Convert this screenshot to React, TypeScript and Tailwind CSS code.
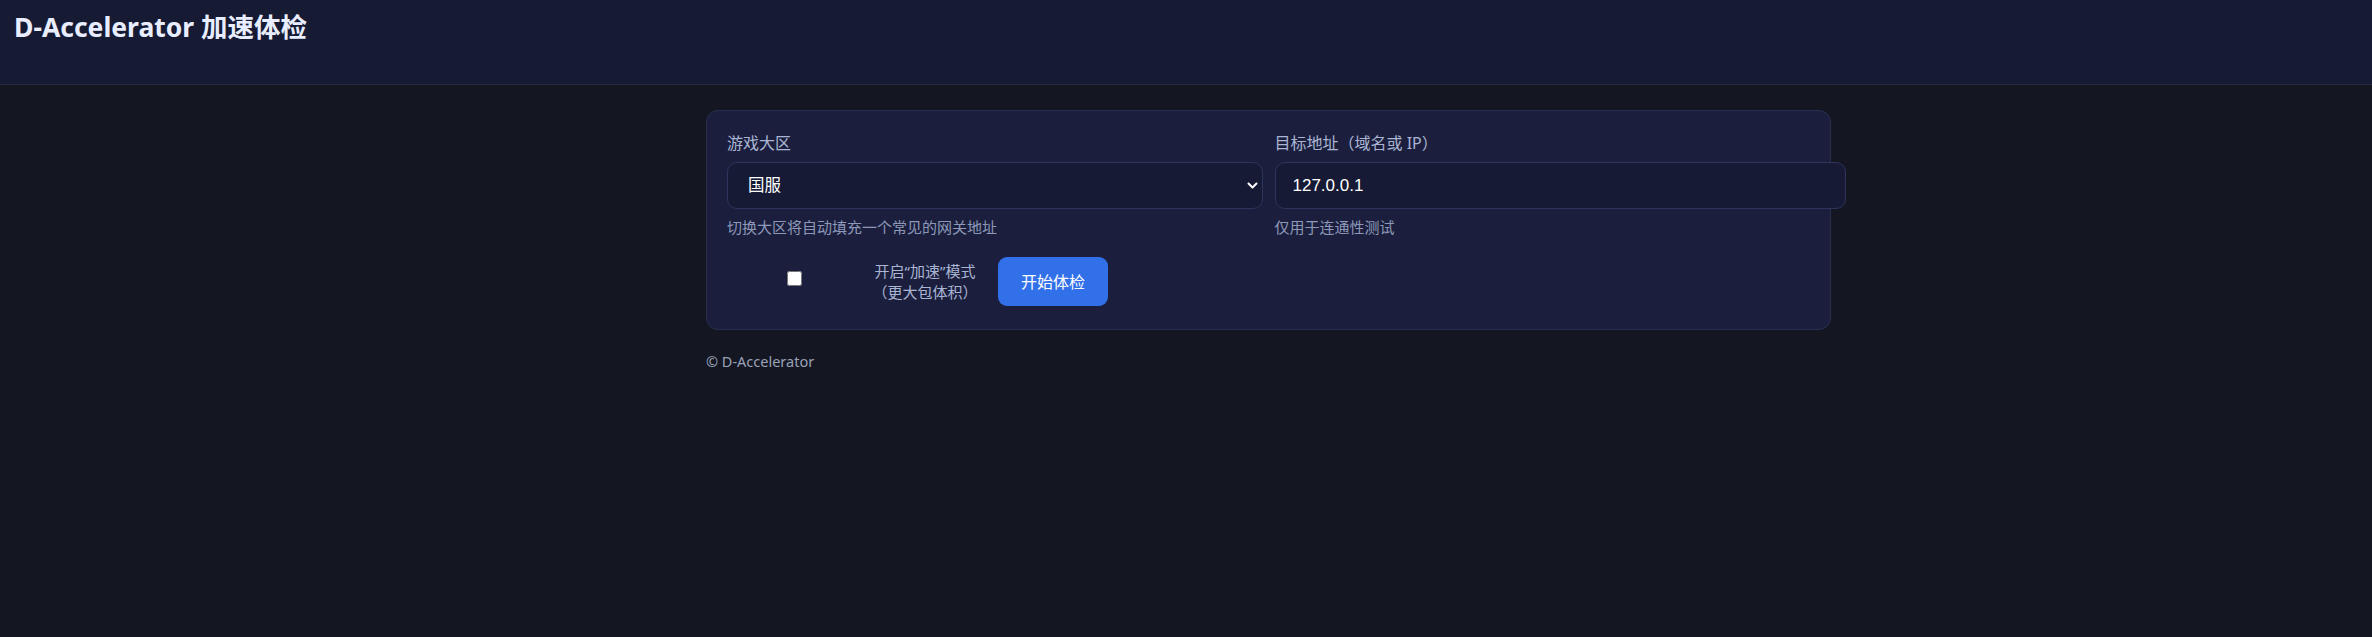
import { useState } from "react"

const regions = [
  { name: "国服", host: "127.0.0.1" },
  { name: "亚服", host: "127.0.0.1" },
  { name: "美服", host: "127.0.0.1" },
  { name: "欧服", host: "127.0.0.1" },
]

export default function App() {
  const [region, setRegion] = useState("国服")
  const [host, setHost] = useState("127.0.0.1")
  const [boost, setBoost] = useState(false)

  return (
    <div className="min-h-[637px] w-full bg-[#141622] font-['Noto_Sans','Noto_Sans_CJK_SC',sans-serif] text-[#dfe6f7]">
      <header className="h-[85px] border-b border-[#262a3f] bg-[#171a33] pl-[14px] pt-[9px]">
        <h1 className="text-[26.5px] font-bold leading-[36px] text-[#e8eeff]">D-Accelerator 加速体检</h1>
      </header>

      <main className="mx-auto w-[960px] pt-[25px]">
        <div className="w-[1125px] rounded-[12px] border border-[#2a2f4e] bg-[#1b1f3d] px-[20px] pt-[20px] pb-[23px]">
          <div className="grid grid-cols-2 gap-x-3">
            <div>
              <label className="mb-[7px] block text-[16px] leading-[24px] text-[#aab5d4]">游戏大区</label>
              <div className="relative">
                <select
                  value={region}
                  onChange={(e) => {
                    setRegion(e.target.value)
                    const r = regions.find((x) => x.name === e.target.value)
                    if (r) setHost(r.host)
                  }}
                  className="h-[47px] w-full appearance-none rounded-[10px] border border-[#2e355c] bg-[#161a35] pl-[20px] text-[16.5px] text-white outline-none"
                >
                  {regions.map((r) => (
                    <option key={r.name} value={r.name}>
                      {r.name}
                    </option>
                  ))}
                </select>
                <svg
                  className="pointer-events-none absolute right-[5px] top-[20px]"
                  width="11"
                  height="8"
                  viewBox="0 0 11 8"
                  fill="none"
                >
                  <path d="M1.5 1.5 5.5 5.5 9.5 1.5" stroke="#ffffff" strokeWidth="2" strokeLinecap="round" strokeLinejoin="round" />
                </svg>
              </div>
              <p className="mt-[8px] text-[15px] leading-[20px] text-[#8d98b9]">切换大区将自动填充一个常见的网关地址</p>
            </div>

            <div>
              <label className="mb-[7px] block text-[16px] leading-[24px] text-[#aab5d4]">目标地址（域名或 IP）</label>
              <input
                value={host}
                onChange={(e) => setHost(e.target.value)}
                className="box-content block h-[21px] w-full rounded-[10px] border border-[#2e355c] bg-[#161a35] px-[17px] py-[12px] font-['Liberation_Sans',Arial,sans-serif] text-[17px] text-white outline-none"
              />
              <p className="mt-[8px] text-[15px] leading-[20px] text-[#8d98b9]">仅用于连通性测试</p>
            </div>
          </div>

          <div className="mt-[20px] flex items-center">
            <label className="flex items-center">
              <span className="flex w-[134px] justify-center pb-[6px]">
                <input
                  type="checkbox"
                  checked={boost}
                  onChange={(e) => setBoost(e.target.checked)}
                  className="h-[15px] w-[15px]"
                />
              </span>
              <span className="ml-[8px] w-[112px] text-center text-[15px] leading-[21px] text-[#aab5d4]">
                开启“加速”模式
                <br />
                （更大包体积）
              </span>
            </label>
            <button className="ml-[17px] h-[49px] rounded-[9px] bg-[#3270e9] px-[23px] text-[16px] text-white">
              开始体检
            </button>
          </div>
        </div>

        <footer className="mt-[21px] text-[14.5px] leading-[20px] text-[#9aa2b8]">© D-Accelerator</footer>
      </main>
    </div>
  )
}
